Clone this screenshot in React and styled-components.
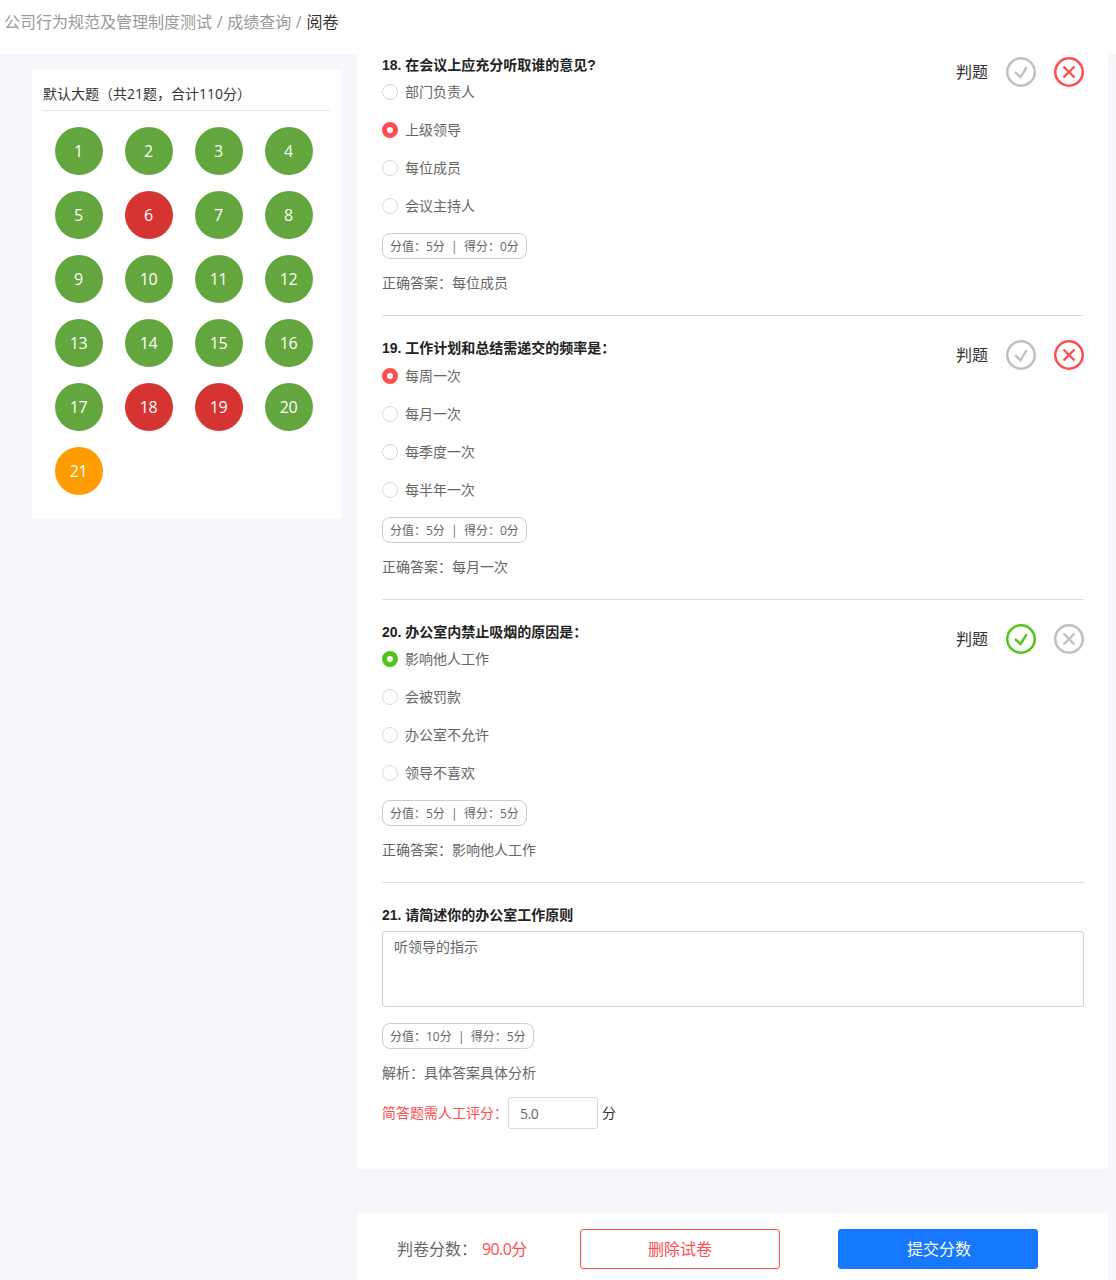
import React from "react";
import styled, { createGlobalStyle } from "styled-components";

const Global = createGlobalStyle`
  html, body { margin: 0; padding: 0; background: #fff; }
  body { font-family: "Open Sans", "Noto Sans CJK SC", sans-serif; color: #333; }
  * { box-sizing: border-box; }
`;
const Page = styled.div`
  width: 1116px; height: 1280px; overflow: hidden; background: #fff;
`;
const Crumbs = styled.div`
  height: 54px; padding: 11px 0 0 4px; font-size: 16px; line-height: 22px; color: #999; word-spacing: 0.5px;
`;
const Current = styled.span`color: #333;`;
const Body = styled.div`
  display: flex; align-items: flex-start; background: #f5f7fb; height: 1226px; padding-left: 32px;
`;
const Side = styled.aside`
  width: 310px; height: 449px; margin-top: 16px; background: #fff; padding: 12px 12px 0 11px; flex: none;
`;
const SideTitle = styled.div`
  height: 29px; border-bottom: 1px solid #e4e4e4; font-size: 14px; line-height: 24px; color: #333;
`;
const Grid = styled.div`
  display: grid; grid-template-columns: repeat(4, 48px); column-gap: 22px; row-gap: 16px; padding: 16px 0 0 12px;
`;
const Dot = styled.div`
  width: 48px; height: 48px; border-radius: 50%; display: flex; align-items: center; justify-content: center;
  color: #fff; font-size: 16px; letter-spacing: -0.3px; padding-right: 1px; background: ${p => p.$c};
`;
const Main = styled.div`
  width: 750px; margin-left: 16px; flex: none;
`;
const Card = styled.div`
  background: #fff; height: 1115px; padding: 0 24px;
`;
const Question = styled.section`
  position: relative; height: ${p => p.$h}px; border-bottom: ${p => p.$last ? "none" : "1px solid #ddd"};
`;
const QTitle = styled.div`
  font-size: 14px; line-height: 22px; font-weight: 700; color: #222; padding-top: ${p => p.$pt}px; font-family: "Liberation Sans", "Noto Sans CJK SC", sans-serif;
`;
const Judge = styled.div`
  position: absolute; right: 0; top: ${p => p.$t}px; display: flex; align-items: center;
`;
const JudgeLabel = styled.span`font-size: 16px; line-height: 30px; height: 30px; color: #333; margin-right: 18px;`;
const IconBtn = styled.svg`
  width: 30px; height: 30px; display: block; margin-left: ${p => p.$ml || 0}px;
`;
const Options = styled.div`
  margin-top: ${p => p.$mt}px;
`;
const Option = styled.div`
  display: flex; align-items: center; height: 38px; font-size: 14px; color: #666;
`;
const Radio = styled.span`
  width: 16px; height: 16px; border-radius: 50%; margin: 2px 7px 0 0; flex: none; background: #fff;
  border: ${p => p.$c ? `5px solid ${p.$c}` : "1px solid #d9d9d9"};
`;
const Score = styled.div`
  display: inline-flex; align-items: center; height: 26px; border: 1px solid #ccc; border-radius: 8px; padding: 0 7px;
  font-size: 12px; color: #666; white-space: pre; margin-top: ${p => p.$mt}px;
`;
const Answer = styled.div`
  font-size: 14px; line-height: 20px; color: #666; margin-top: ${p => p.$mt}px;
`;
const AnswerBox = styled.div`
  height: 76px; border: 1px solid #d0d0d0; border-radius: 3px; padding: 5px 11px; margin-top: 5px; font-size: 14px; line-height: 20px; color: #666;
`;
const ManualRow = styled.div`
  display: flex; align-items: center; margin-top: 14px; font-size: 14px;
`;
const ManualLabel = styled.span`color: #ff4d4f; padding-bottom: 2px;`;
const Input = styled.div`
  width: 90px; height: 32px; border: 1px solid #d9d9d9; border-radius: 3px; margin-right: 4px; padding: 0 11px; display: flex; align-items: center; color: #666; letter-spacing: -0.5px;
`;
const Unit = styled.span`color: #333; padding-bottom: 2px;`;
const Footer = styled.div`
  display: flex; align-items: center; height: 72px; margin-top: 44px; background: #fff; padding: 0 0 0 39px;
`;
const Total = styled.span`font-size: 16px; color: #666; width: 183px; flex: none; padding-bottom: 2px;`;
const TotalNum = styled.span`color: #ff4d4f; margin-left: 5px; letter-spacing: -0.6px;`;
const Btn = styled.div`
  width: 200px; height: 40px; border-radius: 3px; display: flex; align-items: center; justify-content: center; font-size: 16px; padding: 0 0 2px ${p => p.$primary ? 2 : 0}px;
  background: ${p => p.$primary ? "#1677ff" : "#fff"}; color: ${p => p.$primary ? "#fff" : "#ff4d4f"};
  border: 1px solid ${p => p.$primary ? "#1677ff" : "#ff4d4f"};
  margin-left: ${p => p.$ml || 0}px;
`;

const Check = ({ color, ml }) => (
  <IconBtn viewBox="0 0 30 30" $ml={ml}>
    <circle cx="15" cy="15" r="13.75" fill="none" stroke={color} strokeWidth="2.5" />
    <path d="M9 15l5.5 5.2 6.2-10" fill="none" stroke={color} strokeWidth="2.4" />
  </IconBtn>
);
const Cross = ({ color, ml }) => (
  <IconBtn viewBox="0 0 30 30" $ml={ml}>
    <circle cx="15" cy="15" r="13.75" fill="none" stroke={color} strokeWidth="2.5" />
    <path d="M9.5 9.5l11 11M20.5 9.5l-11 11" fill="none" stroke={color} strokeWidth="2.4" />
  </IconBtn>
);

const red = "#d63333", green = "#63a63d", orange = "#ff9c00";
const dots = Array.from({ length: 21 }, (_, i) => {
  const n = i + 1;
  if ([6, 18, 19].includes(n)) return [n, red];
  if (n === 21) return [n, orange];
  return [n, green];
});

const questions = [
  { title: "18. 在会议上应充分听取谁的意见?", h: 262, pt: 0, top: 3, omt: -4, opts: ["部门负责人", "上级领导", "每位成员", "会议主持人"], sel: 1, selc: "#ff4d4f", score: "分值：5分  |  得分：0分", ans: "每位成员", ok: false },
  { title: "19. 工作计划和总结需递交的频率是：", h: 284, pt: 21, top: 24, omt: -3, opts: ["每周一次", "每月一次", "每季度一次", "每半年一次"], sel: 0, selc: "#ff4d4f", score: "分值：5分  |  得分：0分", ans: "每月一次", ok: false },
  { title: "20. 办公室内禁止吸烟的原因是：", h: 283, pt: 21, top: 24, omt: -4, opts: ["影响他人工作", "会被罚款", "办公室不允许", "领导不喜欢"], sel: 0, selc: "#52c41a", score: "分值：5分  |  得分：5分", ans: "影响他人工作", ok: true },
];

export default function App() {
  return (
    <Page>
      <Global />
      <Crumbs>公司行为规范及管理制度测试 / 成绩查询 / <Current>阅卷</Current></Crumbs>
      <Body>
        <Side>
          <SideTitle>默认大题（共21题，合计110分）</SideTitle>
          <Grid>{dots.map(([n, c]) => <Dot key={n} $c={c}>{n}</Dot>)}</Grid>
        </Side>
        <Main>
          <Card>
            {questions.map(q => (
              <Question key={q.title} $h={q.h}>
                <QTitle $pt={q.pt}>{q.title}</QTitle>
                <Judge $t={q.top}>
                  <JudgeLabel>判题</JudgeLabel>
                  <Check color={q.ok ? "#52c41a" : "#c0c0c0"} />
                  <Cross color={q.ok ? "#c0c0c0" : "#ff4d4f"} ml={18} />
                </Judge>
                <Options $mt={q.omt}>
                  {q.opts.map((o, i) => (
                    <Option key={o}><Radio $c={i === q.sel ? q.selc : null} />{o}</Option>
                  ))}
                </Options>
                <Score $mt={9}>{q.score}</Score>
                <Answer $mt={14}>正确答案：{q.ans}</Answer>
              </Question>
            ))}
            <Question $h={286} $last>
              <QTitle $pt={21}>21. 请简述你的办公室工作原则</QTitle>
              <AnswerBox>听领导的指示</AnswerBox>
              <Score $mt={16}>分值：10分  |  得分：5分</Score>
              <Answer $mt={14}>解析：具体答案具体分析</Answer>
              <ManualRow>
                <ManualLabel>简答题需人工评分：</ManualLabel>
                <Input>5.0</Input>
                <Unit>分</Unit>
              </ManualRow>
            </Question>
          </Card>
          <Footer>
            <Total>判卷分数：<TotalNum>90.0分</TotalNum></Total>
            <Btn>删除试卷</Btn>
            <Btn $primary $ml={58}>提交分数</Btn>
          </Footer>
        </Main>
      </Body>
    </Page>
  );
}
